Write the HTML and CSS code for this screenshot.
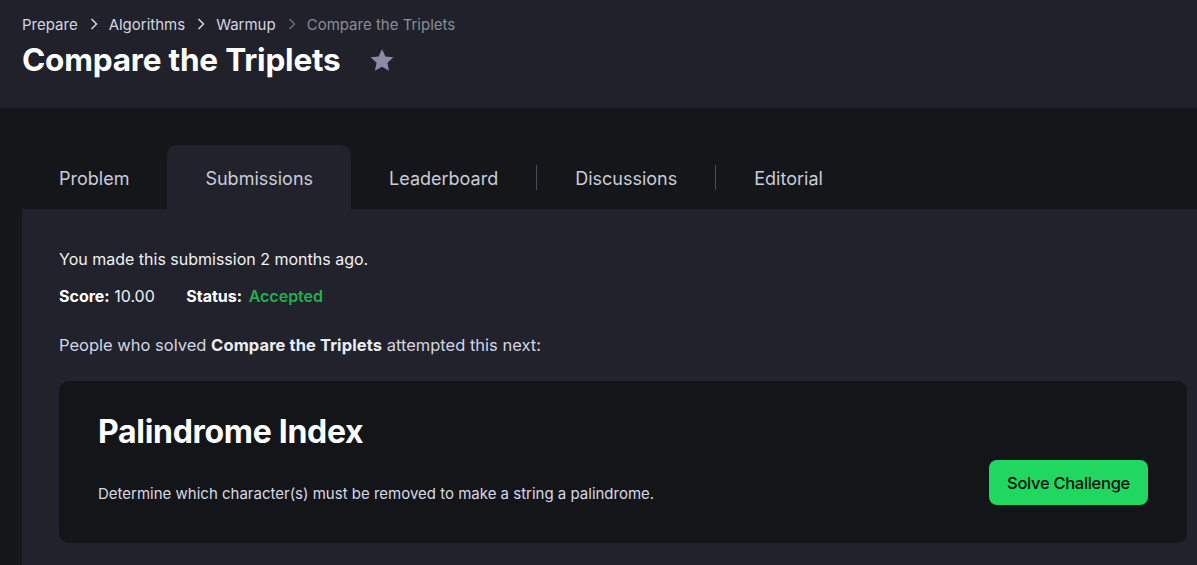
FILE: index.html
```html
<!DOCTYPE html>
<html>
<head>
<meta charset="utf-8">
<link rel="stylesheet" href="styles.css">
</head>
<body>
<header class="header">
  <nav class="crumbs">
    <a class="crumb">Prepare</a>
    <span class="sep"><svg width="10" height="14" viewBox="0 0 10 14"><path d="M2.5 2 L7.5 7 L2.5 12" fill="none" stroke="currentColor" stroke-width="1.5"/></svg></span>
    <a class="crumb">Algorithms</a>
    <span class="sep"><svg width="10" height="14" viewBox="0 0 10 14"><path d="M2.5 2 L7.5 7 L2.5 12" fill="none" stroke="currentColor" stroke-width="1.5"/></svg></span>
    <a class="crumb">Warmup</a>
    <span class="sep dim"><svg width="10" height="14" viewBox="0 0 10 14"><path d="M2.5 2 L7.5 7 L2.5 12" fill="none" stroke="currentColor" stroke-width="1.5"/></svg></span>
    <span class="crumb current">Compare the Triplets</span>
  </nav>
  <div class="title-row">
    <h1 class="title">Compare the Triplets</h1>
    <svg class="star" width="28" height="27" viewBox="0 0 24 24"><path d="M12 1.8l3 6.6 7.2.8-5.4 4.9 1.5 7.1L12 17.6l-6.3 3.6 1.5-7.1-5.4-4.9 7.2-.8z" fill="#8b8ba3"/></svg>
  </div>
</header>
<main class="main">
  <div class="tabs">
    <div class="tab">Problem</div>
    <div class="tab active">Submissions</div>
    <div class="tab">Leaderboard</div>
    <div class="divider"></div>
    <div class="tab">Discussions</div>
    <div class="divider"></div>
    <div class="tab">Editorial</div>
  </div>
  <section class="panel">
    <p class="made">You made this submission 2 months ago.</p>
    <p class="score"><b>Score:</b> 10.00 <b class="status-label">Status:</b> <span class="accepted">Accepted</span></p>
    <p class="people">People who solved <b>Compare the Triplets</b> attempted this next:</p>
    <div class="card">
      <div class="card-text">
        <h2 class="card-title">Palindrome Index</h2>
        <p class="card-desc">Determine which character(s) must be removed to make a string a palindrome.</p>
      </div>
      <button class="solve">Solve Challenge</button>
    </div>
  </section>
</main>
</body>
</html>
```
FILE: styles.css
```css
* { box-sizing: border-box; }
html, body { margin: 0; padding: 0; }
body {
  background: #15161a;
  font-family: Inter, "Noto Sans", sans-serif;
  color: #e6e7ee;
  overflow: hidden;
  height: 565px;
}
.header {
  background: #20212a;
  height: 108px;
  padding: 14px 22px 0;
}
.crumbs {
  display: flex;
  align-items: center;
  font-size: 15px;
  color: #d3d6e2;
  height: 20px;
}
.crumb { color: #d3d6e2; }
.crumb.current { color: #8a8b98; }
.sep { display: inline-flex; color: #d3d6e2; margin: 0 10px 0 11px; }
.sep.dim { color: #6b6c78; }
.title-row {
  display: flex;
  align-items: center;
  margin-top: 6px;
}
.title {
  margin: 0;
  font-size: 31.5px;
  font-weight: 700;
  color: #ffffff;
  letter-spacing: -0.2px;
  line-height: 40px;
}
.star { margin-left: 27px; margin-top: 0; }
.main {
  padding: 37px 0 0 21px;
}
.tabs {
  display: flex;
  align-items: center;
  height: 64px;
}
.tab {
  height: 64px;
  padding: 0 38px;
  display: flex;
  align-items: center;
  font-size: 18px;
  color: #c9ccd9;
  border-radius: 10px 10px 0 0;
  padding-top: 2px;
}
.tab.active { background: #21222b; }
.divider {
  width: 1px;
  height: 25px;
  background: #4a4b55;
}
.panel {
  background: #21222b;
  margin-left: 1px;
  padding: 39px 10px 0 37px;
  height: 356px;
}
.panel p { margin: 0; }
.made { font-size: 16px; color: #f1f2f6; line-height: 22px; }
.score { font-size: 16px; color: #f1f2f6; margin-top: 15px !important; line-height: 22px; }
.score b { font-weight: 700; color: #ffffff; }
.status-label { margin-left: 27px; }
.accepted { color: #22b04e; font-weight: 600; margin-left: 2px; }
.people { font-size: 16.5px; color: #d3d6e2; margin-top: 27px !important; line-height: 22px; }
.people b { color: #eceef5; font-weight: 700; letter-spacing: 0.1px; }
.card {
  margin-top: 25px;
  background: #141519;
  border-radius: 10px;
  height: 162px;
  display: flex;
  align-items: flex-start;
  justify-content: space-between;
  padding: 30px 39px 0 39px;
}
.card-title {
  margin: 0;
  font-size: 32px;
  font-weight: 700;
  color: #ffffff;
  line-height: 42px;
  letter-spacing: -0.3px;
}
.card-desc {
  margin-top: 31px !important;
  font-size: 15px;
  color: #d7d9e6;
  line-height: 20px;
}
.solve {
  margin-top: 49px;
  background: #20d760;
  color: #0e0f12;
  border: none;
  border-radius: 8px;
  height: 45px;
  width: 159px;
  font-family: Inter, "Noto Sans", sans-serif;
  font-size: 16.5px;
  font-weight: 500;
  letter-spacing: -0.3px;
}
```
